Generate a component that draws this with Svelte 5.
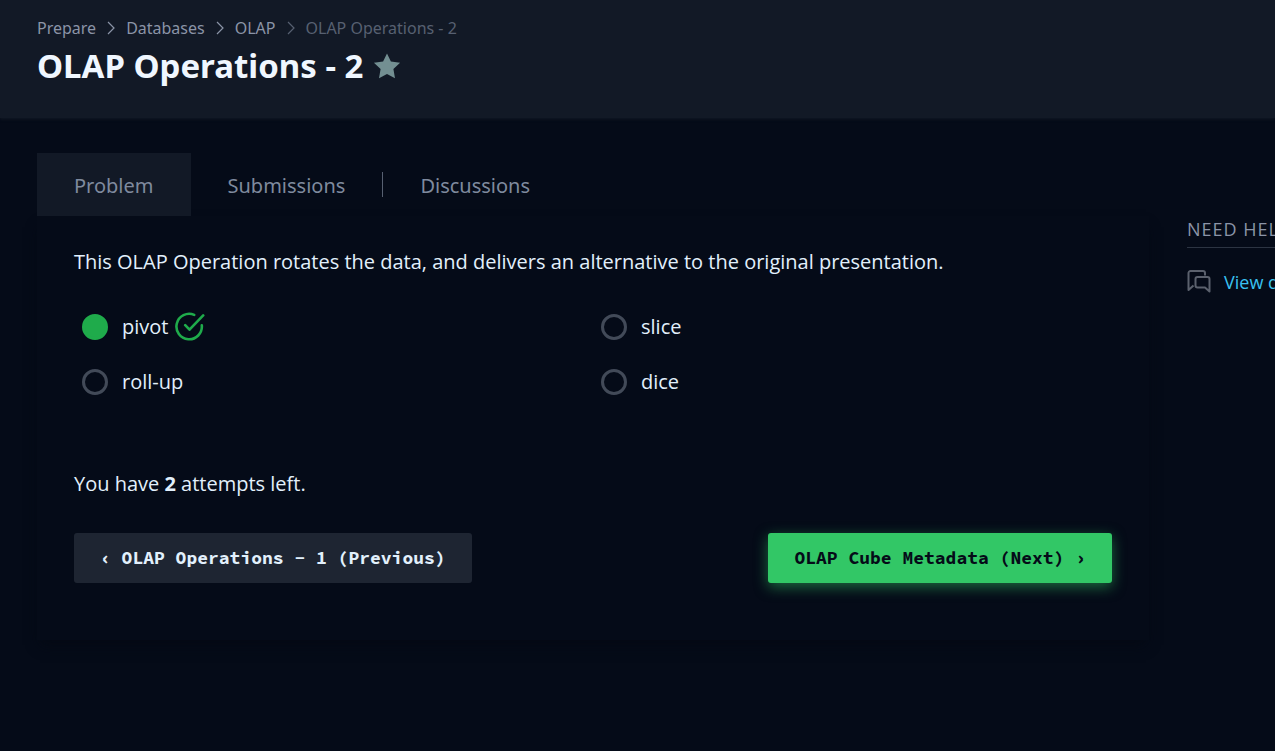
<script>
  const crumbs = ['Prepare', 'Databases', 'OLAP'];
  const options = ['pivot', 'slice', 'roll-up', 'dice'];
  let answer = $state('pivot');
</script>

<header class="page-header">
  <nav class="crumbs" aria-label="Breadcrumb">
    {#each crumbs as crumb, i}
      <a href="#top">{crumb}</a>
      <svg class:dim={i === 2} width="8" height="14" viewBox="0 0 8 14" fill="none" stroke="currentColor" stroke-width="1.2" aria-hidden="true"><path d="M1 1l6 6-6 6" /></svg>
    {/each}
    <span class="current">OLAP Operations - 2</span>
  </nav>
  <div class="title">
    <h1>OLAP Operations - 2</h1>
    <button class="star" aria-label="Bookmark">
      <svg width="28" height="28" viewBox="0 0 28 28" fill="currentColor" aria-hidden="true"><path d="M14 1.500l3.900 8.100 9.200 1.200-6.700 6.200 1.600 9.200-8-4.300-8 4.300 1.600-9.200-6.700-6.200 9.200-1.200z" /></svg>
    </button>
  </div>
</header>

<div class="content">
  <main>
    <nav class="tabs" aria-label="Challenge">
      <a class="active" href="#problem">Problem</a>
      <a href="#submissions">Submissions</a>
      <span class="divider"></span>
      <a href="#discussions">Discussions</a>
    </nav>
    <section class="card">
      <p>This OLAP Operation rotates the data, and delivers an alternative to the original presentation.</p>
      <div class="options">
        {#each options as option}
          <label>
            <input type="radio" name="answer" value={option} bind:group={answer} />
            <span>{option}</span>
            {#if option === 'pivot'}
              <svg class="check" width="30" height="30" viewBox="0 0 30 30" fill="none" stroke="currentColor" stroke-width="2.6" stroke-linecap="round" stroke-linejoin="round" aria-hidden="true"><path d="M19.2 2.9A12.7 12.7 0 1 0 26.8 13.4M10.2 13.2l4.3 4.5L28.2 3.4" /></svg>
            {/if}
          </label>
        {/each}
      </div>
      <p>You have <strong>2</strong> attempts left.</p>
      <div class="actions">
        <button class="btn previous">‹ OLAP Operations - 1 (Previous)</button>
        <button class="btn next">OLAP Cube Metadata (Next) ›</button>
      </div>
    </section>
  </main>
  <aside>
    <h2>NEED HELP?</h2>
    <a href="#discussions">
      <svg width="24" height="24" viewBox="0 0 24 24" fill="none" stroke="#5b616d" stroke-width="2" stroke-linejoin="round" aria-hidden="true"><path d="M18 5.500V3a2 2 0 0 0-2-2H3.500a2 2 0 0 0-2 2V20l5-4.500M10.500 7h10a2 2 0 0 1 2 2v12.500l-4.500-4h-7.500a2 2 0 0 1-2-2V9a2 2 0 0 1 2-2z" /></svg>
      <span>View discussions</span>
    </a>
  </aside>
</div>

<style>
  :global(body) {
    margin: 0;
    min-height: 100vh;
    background: #050b18;
    color: #e2f0fc;
    font: 20px/28px "Open Sans", "Noto Sans", sans-serif;
  }
  a { color: inherit; text-decoration: none; }
  button { font: inherit; border: 0; cursor: pointer; }
  h1, h2, p { margin: 0; }
  .page-header {
    padding: 16px 37px 29px;
    background: #121926;
    box-shadow: 0 1px 3px #121926;
  }
  .crumbs {
    display: flex;
    align-items: center;
    gap: 11px;
    color: #8b94a7;
    font-family: "Noto Sans", sans-serif;
    font-size: 16px;
    line-height: 24px;
  }
  .dim, .current { color: #576071; }
  .title { display: flex; align-items: center; gap: 10px; padding-top: 3px; }
  h1 { color: #f0f7ff; font-family: "Noto Sans", sans-serif; font-size: 33px; line-height: 46px; }
  .star { display: flex; padding: 0; background: none; color: #738f92; }
  .content {
    display: grid;
    grid-template-columns: minmax(0, 1fr) 88px;
    gap: 38px;
    padding: 35px 0 37px 37px;
  }
  .tabs { display: flex; align-items: center; color: #7f8a9e; font-family: "Noto Sans", sans-serif; }
  .tabs a { padding: 19px 37px 16px; }
  .tabs .active { background: #121926; }
  .divider { width: 1px; height: 25px; background: #576071; }
  .card {
    padding: 32px 37px 57px;
    box-shadow: 0 8px 12px -3px #040914;
  }
  .options {
    display: grid;
    grid-template-columns: 1fr 1fr;
    row-gap: 27px;
    padding: 37px 0 74px;
  }
  label { display: flex; align-items: center; padding-left: 8px; }
  .options input {
    appearance: none;
    width: 26px;
    height: 26px;
    margin: 0 14px 0 0;
    border: 3px solid #424a58;
    border-radius: 50%;
  }
  .options input:checked { background: #1fab4b; border-color: #1fab4b; }
  .check { margin: -1px 0 -1px 7px; color: #1fab4b; }
  .actions {
    display: flex;
    flex-wrap: wrap;
    justify-content: space-between;
    gap: 16px;
    padding-top: 35px;
  }
  .btn {
    padding: 11px 26px;
    border-radius: 3px;
    font: bold 18px/28px "Source Code Pro", "Noto Sans Mono", "Liberation Mono", monospace;
  }
  .previous { background: #1e2532; color: #e2f0fc; }
  .next { background: #32c766; color: #050b18; box-shadow: 0 4px 14px #32c76680; }
  aside { padding-top: 61px; white-space: nowrap; overflow: hidden; }
  h2 {
    padding: 3px 0 6px;
    border-bottom: 1px solid #2c3442;
    color: #8b94a7;
    font-size: 18px;
    font-weight: 400;
    line-height: 24px;
    letter-spacing: 1px;
  }
  aside a { display: flex; align-items: center; gap: 13px; padding-top: 20px; color: #39c2f1; font-size: 18px; }
  aside svg { flex: none; }
</style>
